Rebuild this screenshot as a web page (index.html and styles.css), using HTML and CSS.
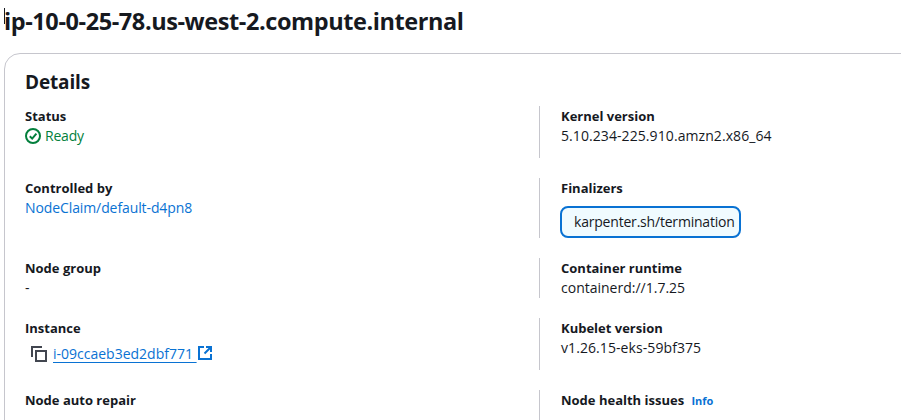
FILE: index.html
```html
<!DOCTYPE html>
<html lang="en">
<head>
<meta charset="utf-8">
<title>Node details</title>
<link rel="stylesheet" href="styles.css">
</head>
<body>
<header class="page-head">
  <span class="caret"></span>
  <h1 class="page-title">ip-10-0-25-78.us-west-2.compute.internal</h1>
</header>
<section class="card">
  <h2 class="card-title">Details</h2>
  <div class="grid">
    <div class="pair row-a">
      <div class="key">Status</div>
      <div class="value status">
        <svg class="ok-icon" viewBox="0 0 16 16" aria-hidden="true"><circle cx="8" cy="8" r="7"/><path d="M4.8 8.2 7.2 10.6 11.4 5.6"/></svg>
        <span>Ready</span>
      </div>
    </div>
    <div class="pair side row-a">
      <div class="key">Kernel version</div>
      <div class="value num">5.10.234-225.910.amzn2.x86_64</div>
    </div>
    <div class="pair row-b">
      <div class="key">Controlled by</div>
      <div class="value"><a class="link tight" href="#">NodeClaim/default-d4pn8</a></div>
    </div>
    <div class="pair side row-b">
      <div class="key">Finalizers</div>
      <div class="value"><span class="token">karpenter.sh/termination</span></div>
    </div>
    <div class="pair">
      <div class="key">Node group</div>
      <div class="value">-</div>
    </div>
    <div class="pair side">
      <div class="key">Container runtime</div>
      <div class="value">containerd://1.7.25</div>
    </div>
    <div class="pair row-a">
      <div class="key">Instance</div>
      <div class="value instance">
        <svg class="copy-icon" viewBox="0 0 16 16" aria-hidden="true"><path d="M1 11V1H11"/><rect x="5" y="5" width="10" height="10"/></svg>
        <a class="link underlined" href="#">i-09ccaeb3ed2dbf771 </a>
        <svg class="ext-icon" viewBox="0 0 14 14" aria-hidden="true"><path d="M6 1H1v12h12V8"/><path d="M8 1h5v5M13 1 6.5 7.5"/></svg>
      </div>
    </div>
    <div class="pair side row-a">
      <div class="key">Kubelet version</div>
      <div class="value num">v1.26.15-eks-59bf375</div>
    </div>
    <div class="pair">
      <div class="key">Node auto repair</div>
    </div>
    <div class="pair side">
      <div class="key">Node health issues <a class="info" href="#">Info</a></div>
    </div>
  </div>
</section>
</body>
</html>
```

FILE: styles.css
```css
html, body {
  margin: 0;
  padding: 0;
  height: 420px;
  overflow: hidden;
  background: #fff;
}

body {
  width: 901px;
  font-family: "Open Sans", "Noto Sans", sans-serif;
  font-size: 14px;
  line-height: 20px;
  color: #16191f;
}

.page-head {
  height: 53px;
  position: relative;
  padding-left: 4px;
}

.caret {
  position: absolute;
  left: 4px;
  top: 8px;
  width: 1px;
  height: 16px;
  background: #16191f;
}

.page-title {
  margin: 0;
  padding-top: 6px;
  font-size: 23.5px;
  line-height: 30px;
  font-weight: 700;
  letter-spacing: -0.42px;
}

.card {
  width: 960px;
  margin-left: 4px;
  border: 1px solid #c6c6cd;
  border-radius: 16px;
  padding: 14px 20px 0;
  box-sizing: border-box;
  height: 420px;
}

.card-title {
  margin: 0 0 10px;
  font-size: 19px;
  line-height: 28px;
  font-weight: 700;
  letter-spacing: -0.15px;
}

.grid {
  display: grid;
  grid-template-columns: 514px 360px;
  row-gap: 20px;
}

.pair { min-height: 40px; }
.row-a { min-height: 52px; }
.row-b { min-height: 60px; }

.side {
  border-left: 1px solid #c6c6cd;
  padding-left: 21px;
}

.key {
  font-weight: 700;
  font-size: 13px;
  color: #16191f;
}

.value { font-size: 14px; }
.num { letter-spacing: 0.08px; }
.tight { letter-spacing: -0.1px; }

.status {
  display: flex;
  align-items: center;
  gap: 4px;
  color: #037f3c;
  letter-spacing: -0.2px;
}

.ok-icon {
  width: 16px;
  height: 16px;
  fill: none;
  stroke: #037f3c;
  stroke-width: 2;
}

.link {
  color: #0972d3;
  text-decoration: none;
}

.underlined {
  text-decoration: underline;
  text-underline-offset: 3px;
  white-space: pre;
}

.instance {
  display: flex;
  align-items: center;
  padding: 6px 0 0 6px;
}

.copy-icon {
  width: 16px;
  height: 16px;
  margin-right: 6px;
  fill: none;
  stroke: #424650;
  stroke-width: 2;
}

.ext-icon {
  width: 14px;
  height: 14px;
  margin: -2px 0 0 1px;
  fill: none;
  stroke: #0972d3;
  stroke-width: 2;
}

.token {
  display: inline-block;
  margin: 8px 0 0 -1px;
  height: 32px;
  box-sizing: border-box;
  width: 181px;
  border: 2px solid #0972d3;
  border-radius: 8px;
  background: #f0fbff;
  padding: 4px 0 0 12px;
  white-space: nowrap;
  letter-spacing: -0.2px;
}

.info {
  margin-left: 4px;
  color: #0972d3;
  font-size: 11px;
  text-decoration: none;
}
```
